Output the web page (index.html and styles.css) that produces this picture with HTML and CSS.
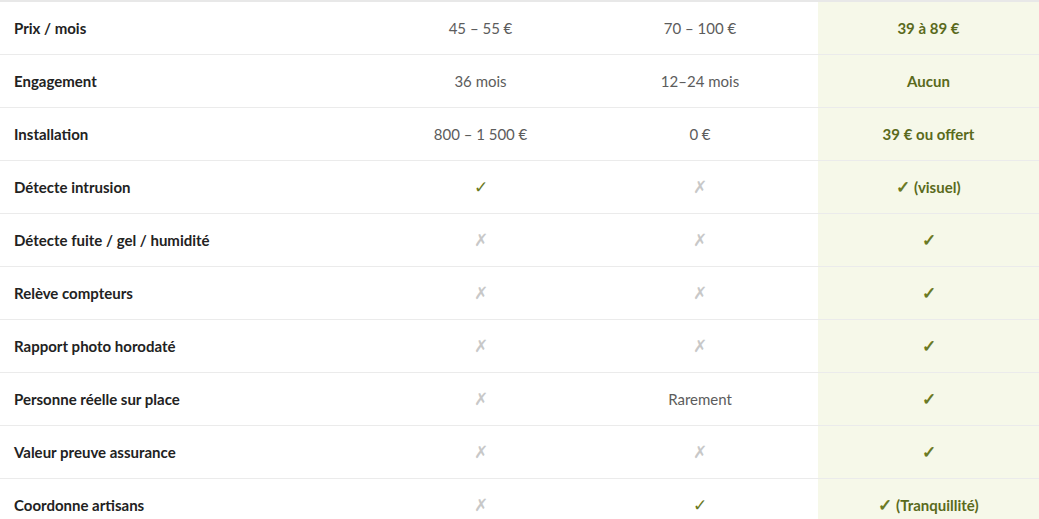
FILE: index.html
```html
<!DOCTYPE html>
<html lang="fr">
<head>
<meta charset="utf-8">
<link rel="stylesheet" href="styles.css">
</head>
<body>
<table class="compare">
  <colgroup>
    <col class="c-label"><col class="c-a"><col class="c-b"><col class="c-us">
  </colgroup>
  <tbody>
    <tr><th>Prix / mois</th><td>45 – 55&#8239;€</td><td>70 – 100&#8239;€</td><td class="us">39 à 89&#8239;€</td></tr>
    <tr><th>Engagement</th><td>36 mois</td><td>12–24 mois</td><td class="us">Aucun</td></tr>
    <tr><th>Installation</th><td>800 – 1&#8239;500&#8239;€</td><td>0&#8239;€</td><td class="us">39&#8239;€ ou offert</td></tr>
    <tr><th>Détecte intrusion</th><td><span class="yes">✓</span></td><td><span class="no">✗</span></td><td class="us"><span class="ck">✓</span> (visuel)</td></tr>
    <tr><th>Détecte fuite / gel / humidité</th><td><span class="no">✗</span></td><td><span class="no">✗</span></td><td class="us"><span class="ck">✓</span></td></tr>
    <tr><th>Relève compteurs</th><td><span class="no">✗</span></td><td><span class="no">✗</span></td><td class="us"><span class="ck">✓</span></td></tr>
    <tr><th>Rapport photo horodaté</th><td><span class="no">✗</span></td><td><span class="no">✗</span></td><td class="us"><span class="ck">✓</span></td></tr>
    <tr><th>Personne réelle sur place</th><td><span class="no">✗</span></td><td>Rarement</td><td class="us"><span class="ck">✓</span></td></tr>
    <tr><th>Valeur preuve assurance</th><td><span class="no">✗</span></td><td><span class="no">✗</span></td><td class="us"><span class="ck">✓</span></td></tr>
    <tr><th>Coordonne artisans</th><td><span class="no">✗</span></td><td><span class="yes">✓</span></td><td class="us"><span class="ck">✓</span> (Tranquillité)</td></tr>
  </tbody>
</table>
</body>
</html>
```
FILE: styles.css
```css
html, body {
  margin: 0;
  padding: 0;
  background: #ffffff;
  overflow: hidden;
}
.compare {
  width: 100%;
  border-collapse: collapse;
  table-layout: fixed;
  border-top: 2px solid #e8e8e8;
  font-family: Lato, "Open Sans", sans-serif;
  font-size: 15px;
  line-height: 18px;
}
.c-label { width: 379px; }
.c-a { width: 203px; }
.c-b { width: 236px; }
.compare tr + tr th,
.compare tr + tr td {
  border-top: 1px solid #ebebeb;
}
.compare th,
.compare td {
  padding: 17px 0;
  vertical-align: middle;
}
.compare th {
  text-align: left;
  font-weight: 700;
  color: #222222;
  padding-left: 14px;
}
.compare td {
  text-align: center;
  color: #5c5c5c;
}
.compare td.us {
  background: #f6f8e9;
  color: #5a6a1c;
  font-weight: 700;
}
.yes, .ck, .no {
  display: inline-block;
  line-height: 18px;
  height: 18px;
  vertical-align: top;
  font-size: 17px;
}
.yes, .ck {
  color: #6b7a24;
}
.no {
  color: #c8c8c8;
  font-weight: 400;
}
```
